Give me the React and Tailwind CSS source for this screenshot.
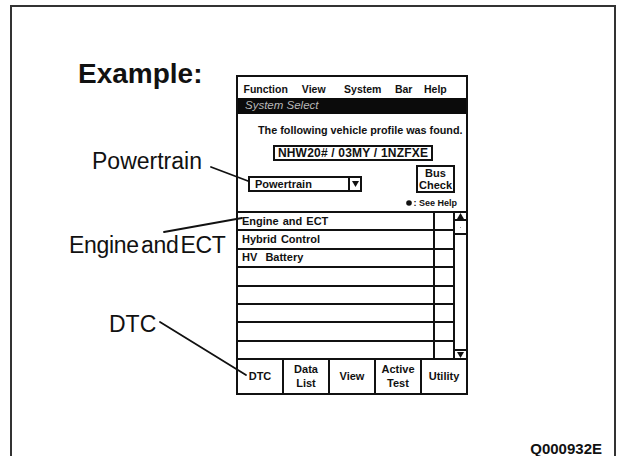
import React from "react";

const menu = [
  { label: "Function", cls: "ml-[5.5px]" },
  { label: "View", cls: "ml-[14px]" },
  { label: "System", cls: "ml-[18.5px]" },
  { label: "Bar", cls: "ml-[13.5px]" },
  { label: "Help", cls: "ml-[11.5px]" },
];

const rows = ["Engine and ECT", "Hybrid Control", "HV\u00a0 Battery", "", "", "", "", ""];

const buttons = [["DTC"], ["Data", "List"], ["View"], ["Active", "Test"], ["Utility"]];

function Tri({ down }) {
  return (
    <svg width="7" height="6" viewBox="0 0 7 6">
      <polygon points={down ? "0,0 7,0 3.5,6" : "3.5,0 7,6 0,6"} fill="#111" />
    </svg>
  );
}

function Window() {
  return (
    <div className="mt-[68px] w-[232px] border-2 border-[#111] bg-white">
      {/* menu */}
      <div className="flex h-[21px] pt-[6px] text-[10.5px] font-bold leading-[12px]">
        {menu.map((m) => (
          <span key={m.label} className={m.cls}>
            {m.label}
          </span>
        ))}
      </div>
      <div className="flex h-[16px] items-center bg-[#0b0b0b] pl-[7px] text-[11.5px] italic leading-none text-[#b8b8b8]">
        System Select
      </div>

      {/* profile */}
      <div className="flex h-[97px] flex-col">
        <div className="whitespace-nowrap pl-[20px] pt-[10px] text-[10.8px] font-bold leading-[13px]">
          The following vehicle profile was found.
        </div>
        <div className="ml-[35px] mt-[8px] flex h-[16px] w-[160px] items-center justify-center border-2 border-[#111] text-[12px] font-bold leading-none tracking-[0.2px]">
          NHW20# / 03MY / 1NZFXE
        </div>
        <div className="mt-[4px] flex items-end pl-[10px]">
          <div className="mb-[1px] flex h-[16px] w-[114px] border-2 border-[#111]">
            <div className="flex flex-1 items-center border-r-2 border-[#111] pl-[5px] text-[11px] font-bold leading-none">
              Powertrain
            </div>
            <div className="flex w-[10px] items-center justify-center">
              <Tri down />
            </div>
          </div>
          <div className="ml-[54px] flex h-[28px] w-[39px] flex-col items-center justify-center border-2 border-[#111] text-[11px] font-bold leading-[12px]">
            <span>Bus</span>
            <span>Check</span>
          </div>
        </div>
        <div className="mt-[5px] flex items-center justify-end pr-[9px] text-[9px] font-bold leading-[10px]">
          <svg width="6" height="6" viewBox="0 0 6 6" className="mr-[1px]">
            <circle cx="3" cy="3" r="2.8" fill="#111" />
          </svg>
          <span>: See Help</span>
        </div>
      </div>

      {/* list */}
      <div className="flex border-t-2 border-[#111]">
        <div className="w-[217px] border-r-2 border-[#111]">
          {rows.map((r, i) => (
            <div key={i} className="flex h-[18.4px] border-b-2 border-[#111]">
              <div className="flex flex-1 items-center whitespace-pre border-r-2 border-[#111] pl-[4px] text-[11px] font-bold leading-none [word-spacing:1px]">
                {r}
              </div>
              <div className="w-[18px]" />
            </div>
          ))}
        </div>
        <div className="flex flex-1 flex-col border-b-2 border-[#111]">
          <div className="flex h-[8px] items-start justify-center border-b-2 border-[#111]">
            <Tri />
          </div>
          <div className="flex h-[14px] items-center justify-center border-b-2 border-[#111]">
            <div className="h-[1px] w-[1px] bg-[#999]" />
          </div>
          <div className="flex-1" />
          <div className="flex h-[9px] items-end justify-center border-t-2 border-[#111]">
            <Tri down />
          </div>
        </div>
      </div>

      {/* buttons */}
      <div className="flex h-[33px]">
        {buttons.map((b, i) => (
          <div
            key={i}
            className={
              i < 4
                ? "flex flex-1 flex-col items-center justify-center border-r-2 border-[#111] pb-[2px] text-[11px] font-bold leading-[14px]"
                : "flex flex-1 flex-col items-center justify-center pb-[2px] text-[11px] font-bold leading-[14px]"
            }
          >
            {b.map((t) => (
              <span key={t}>{t}</span>
            ))}
          </div>
        ))}
      </div>
    </div>
  );
}

export default function App() {
  return (
    <div className="relative h-[456px] w-[621px] overflow-hidden bg-white pl-[10px] pt-[5px] font-['Liberation_Sans',Arial,sans-serif] text-[#111]">
      <div className="flex h-[470px] w-[606px] flex-col border-x-2 border-t-2 border-[#333]">
        <div className="flex">
          <div className="flex w-[224px] flex-col items-start">
            <div className="ml-[66px] mt-[53px] text-[28px] font-bold leading-[28px]">Example:</div>
            <div className="ml-[80px] mt-[62px] text-[23px] leading-[23px]">Powertrain</div>
            <div className="ml-[57px] mt-[61px] whitespace-nowrap text-[23px] leading-[23px] tracking-[-0.3px] [word-spacing:-4px]">
              Engine and ECT
            </div>
            <div className="ml-[97px] mt-[56px] text-[23px] leading-[23px]">DTC</div>
          </div>
          <Window />
        </div>
        <div className="mt-[46px] pr-[12px] text-right text-[15px] font-bold leading-[15px]">Q000932E</div>
      </div>

      {/* leader lines */}
      <svg className="pointer-events-none absolute left-0 top-0" width="621" height="456">
        <g stroke="#111" strokeWidth="1.8" strokeLinecap="round">
          <line x1="211" y1="167" x2="248" y2="181" />
          <line x1="164" y1="232" x2="242" y2="218" />
          <line x1="160" y1="322" x2="246" y2="375" />
        </g>
      </svg>
    </div>
  );
}
